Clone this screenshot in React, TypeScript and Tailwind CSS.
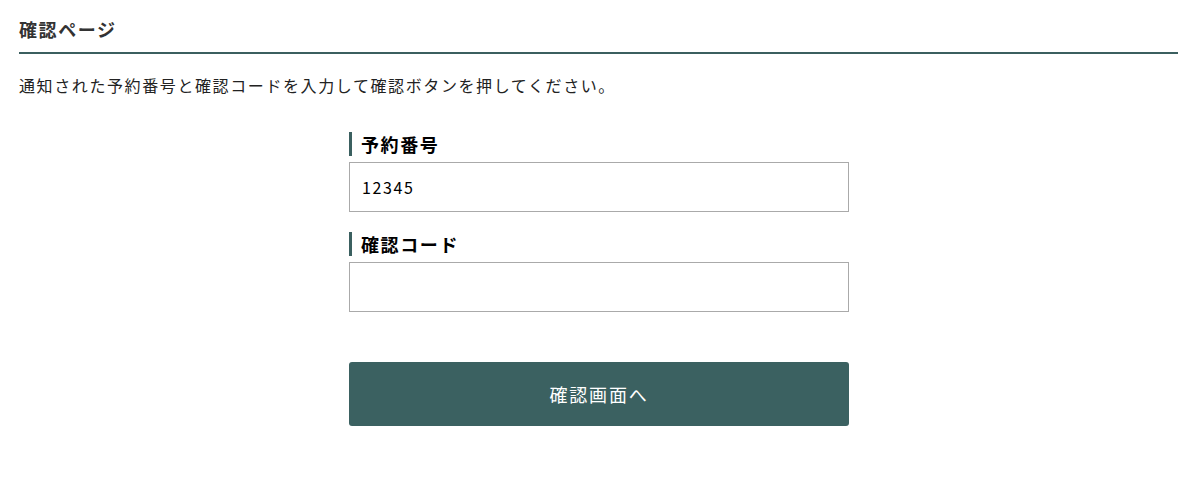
export default function App() {
  return (
    <div className="w-[1196px] h-[484px] bg-white pl-[19px] pr-[18px] pt-[14px] text-[#333] tracking-[0.1em]" style={{ fontFamily: '"Noto Sans CJK JP", "Noto Sans", sans-serif' }}>
      <h1 className="text-[18px] font-bold leading-[30px] pb-[8px] border-b-2 border-[#3b5f5f]">確認ページ</h1>
      <p className="mt-[19px] text-[16px] leading-[24px] text-[#222]">通知された予約番号と確認コードを入力して確認ボタンを押してください。</p>
      <div className="w-[500px] ml-[330px] mt-[35px]">
        <label className="block border-l-[3px] border-[#3b6060] pl-[9px] text-[18px] font-bold leading-[24px] text-black">予約番号</label>
        <input defaultValue="12345" className="mt-[6px] block w-full h-[50px] border border-[#aaaaaa] px-[12px] text-[16px] text-black tracking-[0.1em] outline-none" style={{ fontFamily: '"Noto Sans CJK JP", sans-serif' }} />
        <label className="mt-[20px] block border-l-[3px] border-[#3b6060] pl-[9px] text-[18px] font-bold leading-[24px] text-black">確認コード</label>
        <input className="mt-[6px] block w-full h-[50px] border border-[#aaaaaa] px-[12px] text-[16px] text-black outline-none" />
        <button className="mt-[50px] w-full h-[64px] rounded-[3px] bg-[#3b6161] text-white text-[18px] tracking-[0.1em]">確認画面へ</button>
      </div>
    </div>
  );
}
